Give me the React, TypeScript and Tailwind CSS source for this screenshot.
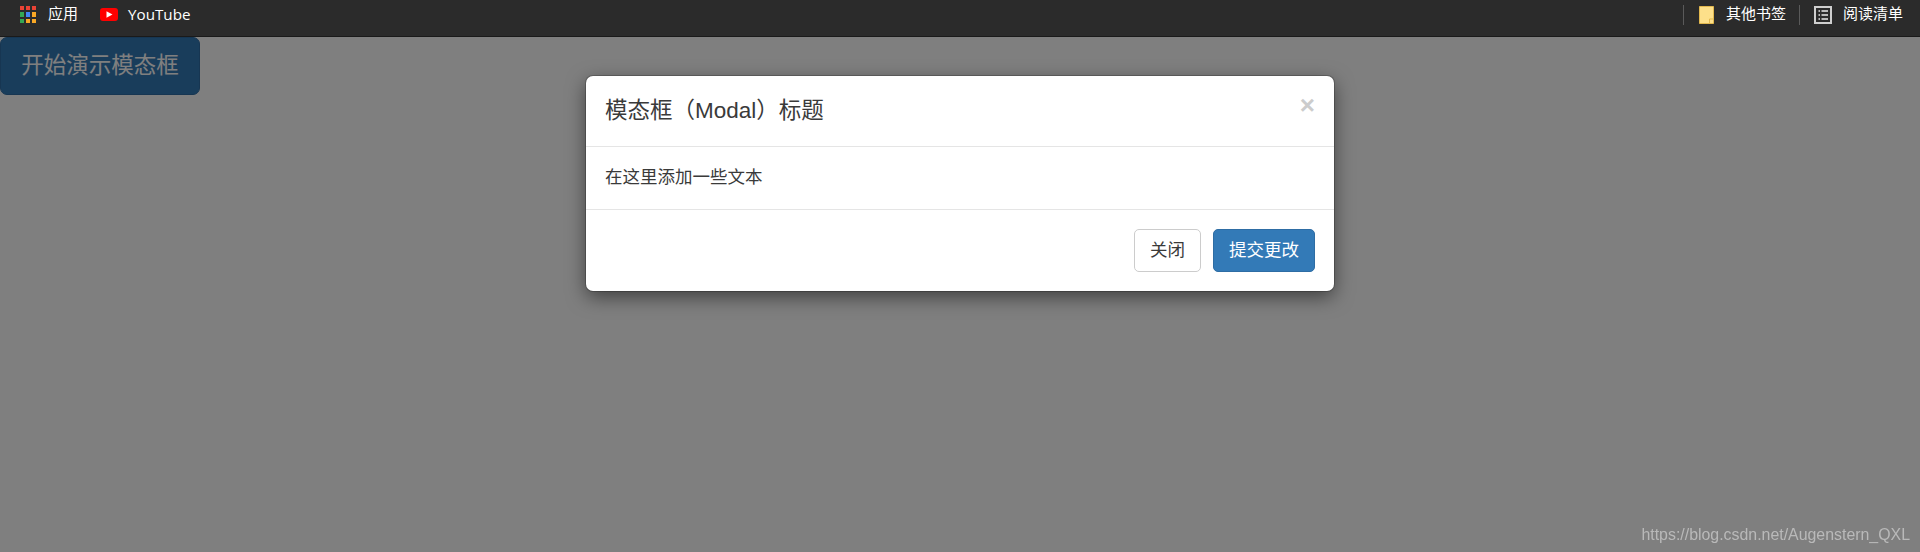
export default function App() {
  const font = "font-['Liberation_Sans','Noto_Sans_CJK_SC',sans-serif]";
  const grid = ["#ea4335", "#ea4335", "#ea4335", "#34a853", "#4285f4", "#f9a825", "#34a853", "#f9a825", "#f9a825"];
  return (
    <div className={`flex h-[552px] w-[1920px] flex-col overflow-hidden bg-white ${font}`}>
      <div className="flex h-[37px] shrink-0 items-start justify-between border-b border-[#1a1a1a] bg-[#2b2b2b] text-[15px] text-white">
        <div className="flex h-[29px] items-center pl-5">
          <div className="grid w-[16px] grid-cols-3 gap-x-[2px] gap-y-[2px]">
            {grid.map((c, i) => (
              <span key={i} className="h-[4.5px] w-[4px]" style={{ background: c }} />
            ))}
          </div>
          <span className="ml-3">应用</span>
          <svg className="ml-[22px]" width="18" height="13" viewBox="0 0 18 13">
            <rect width="18" height="13" rx="3" fill="#ff0000" />
            <path d="M6.5 3.2 L12.5 6.5 L6.5 9.8 Z" fill="#fff" />
          </svg>
          <span className="ml-[10px] font-['Open_Sans'] text-[15.2px]">YouTube</span>
        </div>
        <div className="flex h-[29px] items-center pr-[17px]">
          <span className="h-[20px] w-px bg-[#5a5a5a]" />
          <svg className="ml-[15px]" width="15" height="18" viewBox="0 0 15 18">
            <path d="M0.5 0.5 H14.5 V17.5 H0.5 Z" fill="#fde08a" stroke="#e2b84e" />
            <path d="M10.5 17.5 V13 H14.5" fill="none" stroke="#e2b84e" />
          </svg>
          <span className="ml-[12px]">其他书签</span>
          <span className="ml-[13px] h-[20px] w-px bg-[#5a5a5a]" />
          <svg className="ml-[14px]" width="18" height="18" viewBox="0 0 18 18" fill="none">
            <rect x="1" y="1" width="16" height="16" stroke="#cfcfcf" strokeWidth="2" />
            <path d="M4.5 5 H6 M7.5 5 H14 M4.5 9 H6 M7.5 9 H14 M4.5 13 H6 M7.5 13 H14" stroke="#e8e8e8" strokeWidth="1.5" />
          </svg>
          <span className="ml-[11px]">阅读清单</span>
        </div>
      </div>
      <div className="relative flex-1">
        <button className="block h-[58px] w-[200px] rounded-[7px] border border-[#2e6da4] bg-[#337ab7] text-[22.5px] text-white">
          开始演示模态框
        </button>
        <div className="absolute inset-0 bg-[rgba(0,0,0,0.5)]" />
        <div className="absolute left-[586px] top-[39px] w-[748px] rounded-[7px] bg-white text-[17.5px] text-[#3a3a3a] shadow-[0_0_0_1px_rgba(0,0,0,0.2),0_6px_19px_rgba(0,0,0,0.5)]">
          <div className="relative flex h-[71px] items-center border-b border-[#e5e5e5] pl-[19px] text-[22.5px]">
            模态框（Modal）标题
            <span className="absolute right-[19px] top-[16px] text-[26px] font-bold leading-[26px] text-[#ccc]">×</span>
          </div>
          <div className="flex h-[63px] items-center border-b border-[#e5e5e5] pb-[2px] pl-[19px]">在这里添加一些文本</div>
          <div className="flex h-[81px] items-center justify-end gap-[12px] pr-[19px]">
            <button className="h-[43px] w-[67px] rounded-[5px] border border-[#ccc] bg-white text-[#3a3a3a]">关闭</button>
            <button className="h-[43px] w-[102px] rounded-[5px] border border-[#2e6da4] bg-[#337ab7] text-white">提交更改</button>
          </div>
        </div>
        <span className="absolute right-[10px] top-[486px] text-[15.9px] text-[#b9b9b9] blur-[0.4px]">
          https://blog.csdn.net/Augenstern_QXL
        </span>
      </div>
    </div>
  );
}
